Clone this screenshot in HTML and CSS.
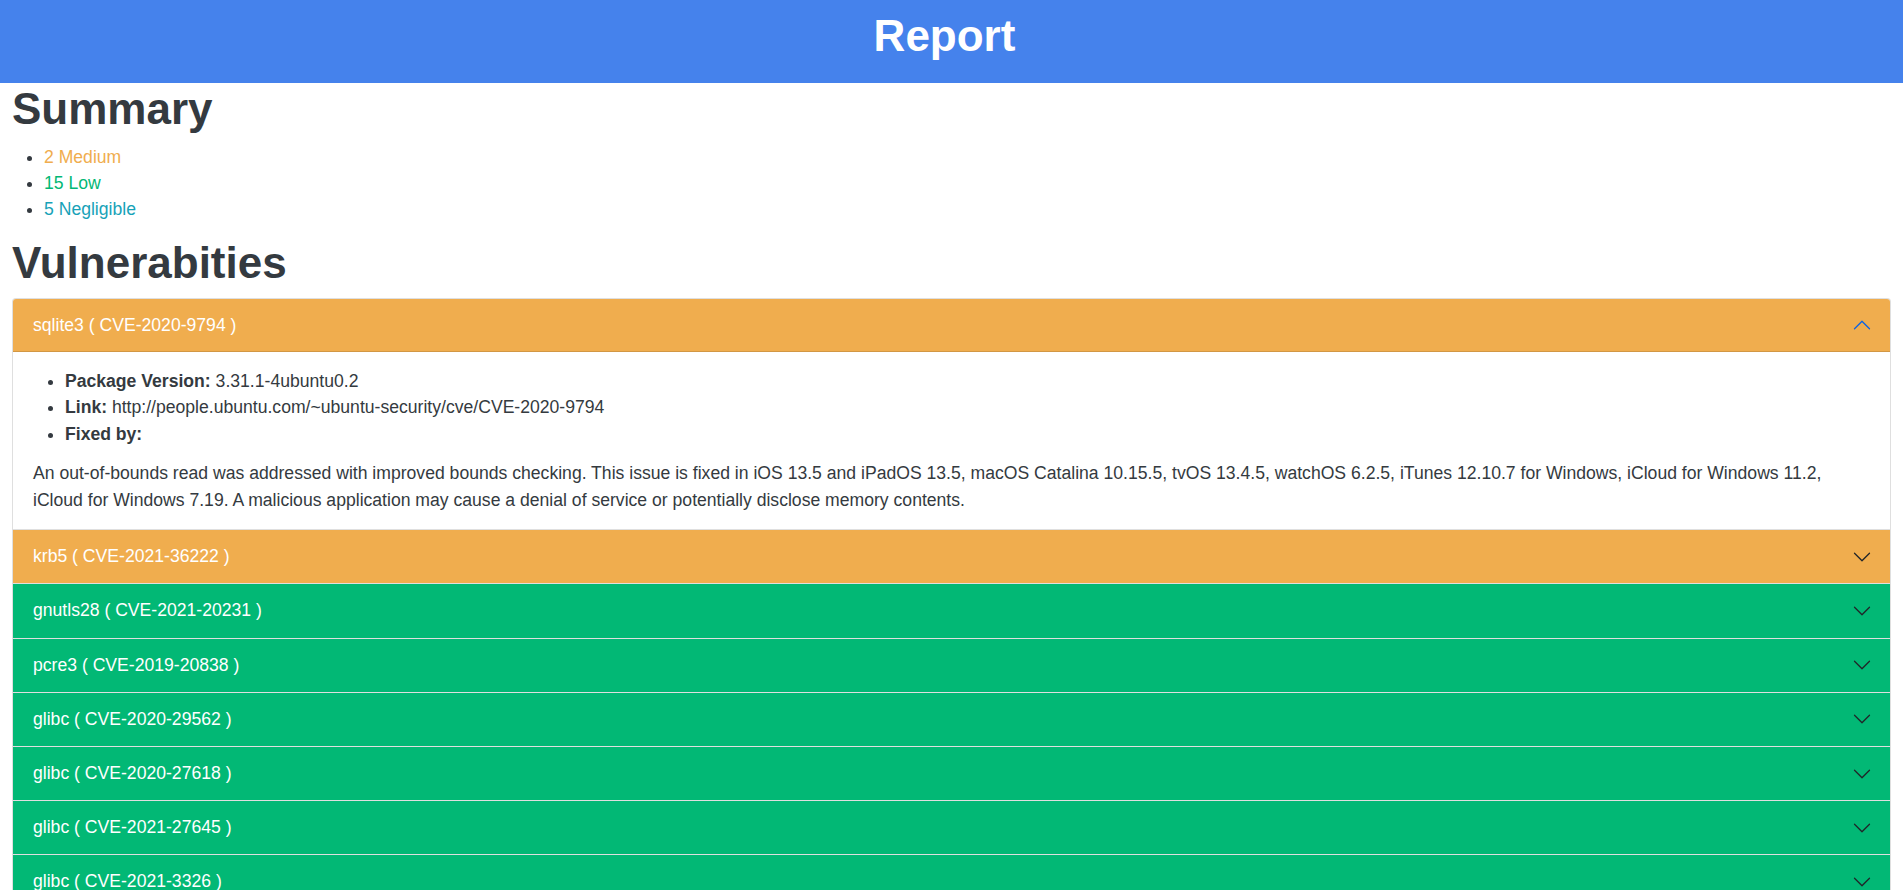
FILE: index.html
```html
<!DOCTYPE html>
<html lang="en">
<head>
<meta charset="utf-8">
<title>Report</title>
<link rel="stylesheet" href="styles.css">
</head>
<body>
<header class="topbar">
  <h1 class="topbar-title">Report</h1>
</header>
<main class="content">
  <h1 class="heading">Summary</h1>
  <ul class="summary-list">
    <li><span class="sev-medium">2 Medium</span></li>
    <li><span class="sev-low">15 Low</span></li>
    <li><span class="sev-negligible">5 Negligible</span></li>
  </ul>
  <h1 class="heading">Vulnerabities</h1>
  <div class="accordion">
    <div class="acc-item">
      <h2 class="acc-header">
        <button class="acc-btn bg-medium open" type="button">sqlite3 ( CVE-2020-9794 )
          <svg class="acc-icon icon-open" viewBox="0 0 16 16"><path fill-rule="evenodd" d="M1.646 4.646a.5.5 0 0 1 .708 0L8 10.293l5.646-5.647a.5.5 0 0 1 .708.708l-6 6a.5.5 0 0 1-.708 0l-6-6a.5.5 0 0 1 0-.708z"/></svg>
        </button>
      </h2>
      <div class="acc-body">
        <ul class="detail-list">
          <li><b>Package Version:</b> 3.31.1-4ubuntu0.2</li>
          <li><b>Link:</b> http://people.ubuntu.com/~ubuntu-security/cve/CVE-2020-9794</li>
          <li><b>Fixed by:</b></li>
        </ul>
        <p class="desc">An out-of-bounds read was addressed with improved bounds checking. This issue is fixed in iOS 13.5 and iPadOS 13.5, macOS Catalina 10.15.5, tvOS 13.4.5, watchOS 6.2.5, iTunes 12.10.7 for Windows, iCloud for Windows 11.2, iCloud for Windows 7.19. A malicious application may cause a denial of service or potentially disclose memory contents.</p>
      </div>
    </div>
    <div class="acc-item">
      <h2 class="acc-header">
        <button class="acc-btn bg-medium" type="button">krb5 ( CVE-2021-36222 )
          <svg class="acc-icon" viewBox="0 0 16 16"><path fill-rule="evenodd" d="M1.646 4.646a.5.5 0 0 1 .708 0L8 10.293l5.646-5.647a.5.5 0 0 1 .708.708l-6 6a.5.5 0 0 1-.708 0l-6-6a.5.5 0 0 1 0-.708z"/></svg>
        </button>
      </h2>
    </div>
    <div class="acc-item">
      <h2 class="acc-header">
        <button class="acc-btn bg-low" type="button">gnutls28 ( CVE-2021-20231 )
          <svg class="acc-icon" viewBox="0 0 16 16"><path fill-rule="evenodd" d="M1.646 4.646a.5.5 0 0 1 .708 0L8 10.293l5.646-5.647a.5.5 0 0 1 .708.708l-6 6a.5.5 0 0 1-.708 0l-6-6a.5.5 0 0 1 0-.708z"/></svg>
        </button>
      </h2>
    </div>
    <div class="acc-item">
      <h2 class="acc-header">
        <button class="acc-btn bg-low" type="button">pcre3 ( CVE-2019-20838 )
          <svg class="acc-icon" viewBox="0 0 16 16"><path fill-rule="evenodd" d="M1.646 4.646a.5.5 0 0 1 .708 0L8 10.293l5.646-5.647a.5.5 0 0 1 .708.708l-6 6a.5.5 0 0 1-.708 0l-6-6a.5.5 0 0 1 0-.708z"/></svg>
        </button>
      </h2>
    </div>
    <div class="acc-item">
      <h2 class="acc-header">
        <button class="acc-btn bg-low" type="button">glibc ( CVE-2020-29562 )
          <svg class="acc-icon" viewBox="0 0 16 16"><path fill-rule="evenodd" d="M1.646 4.646a.5.5 0 0 1 .708 0L8 10.293l5.646-5.647a.5.5 0 0 1 .708.708l-6 6a.5.5 0 0 1-.708 0l-6-6a.5.5 0 0 1 0-.708z"/></svg>
        </button>
      </h2>
    </div>
    <div class="acc-item">
      <h2 class="acc-header">
        <button class="acc-btn bg-low" type="button">glibc ( CVE-2020-27618 )
          <svg class="acc-icon" viewBox="0 0 16 16"><path fill-rule="evenodd" d="M1.646 4.646a.5.5 0 0 1 .708 0L8 10.293l5.646-5.647a.5.5 0 0 1 .708.708l-6 6a.5.5 0 0 1-.708 0l-6-6a.5.5 0 0 1 0-.708z"/></svg>
        </button>
      </h2>
    </div>
    <div class="acc-item">
      <h2 class="acc-header">
        <button class="acc-btn bg-low" type="button">glibc ( CVE-2021-27645 )
          <svg class="acc-icon" viewBox="0 0 16 16"><path fill-rule="evenodd" d="M1.646 4.646a.5.5 0 0 1 .708 0L8 10.293l5.646-5.647a.5.5 0 0 1 .708.708l-6 6a.5.5 0 0 1-.708 0l-6-6a.5.5 0 0 1 0-.708z"/></svg>
        </button>
      </h2>
    </div>
    <div class="acc-item">
      <h2 class="acc-header">
        <button class="acc-btn bg-low" type="button">glibc ( CVE-2021-3326 )
          <svg class="acc-icon" viewBox="0 0 16 16"><path fill-rule="evenodd" d="M1.646 4.646a.5.5 0 0 1 .708 0L8 10.293l5.646-5.647a.5.5 0 0 1 .708.708l-6 6a.5.5 0 0 1-.708 0l-6-6a.5.5 0 0 1 0-.708z"/></svg>
        </button>
      </h2>
    </div>
  </div>
</main>
</body>
</html>
```

FILE: styles.css
```css
html, body {
  margin: 0;
  padding: 0;
}

body {
  font-family: "Liberation Sans", Arial, sans-serif;
  font-size: 17.6px;
  line-height: 1.5;
  color: #343a40;
  background: #fff;
}

.topbar {
  background: #4582ec;
  padding: 10px 14px 12px 0;
  text-align: center;
}

.topbar-title {
  margin: 0 0 8px;
  font-size: 44px;
  line-height: 1.2;
  font-weight: 700;
  color: #fff;
}

.content {
  padding: 0 12px;
}

.heading {
  margin: 0 0 8px;
  font-size: 44px;
  line-height: 1.2;
  font-weight: 700;
  color: #343a40;
}

.summary-list {
  margin: 0 0 14px;
  padding-left: 32px;
}

.sev-medium { color: #f0ad4e; }
.sev-low { color: #02b875; }
.sev-negligible { color: #17a2b8; }

.accordion {
  display: flex;
  flex-direction: column;
}

.acc-item {
  background: #fff;
  border: 1px solid rgba(0, 0, 0, 0.125);
  border-top: 0;
}

.acc-item:first-child {
  border-top: 1px solid rgba(0, 0, 0, 0.125);
  border-top-left-radius: 4px;
  border-top-right-radius: 4px;
}

.acc-item:first-child .acc-btn {
  border-top-left-radius: 3px;
  border-top-right-radius: 3px;
}

.acc-header {
  margin: 0;
  font-size: inherit;
  font-weight: 400;
}

.acc-btn {
  display: flex;
  align-items: center;
  width: 100%;
  margin: 0;
  padding: 16px 18px 16px 20px;
  border: 0;
  font-family: inherit;
  font-size: 17.6px;
  line-height: 21.2px;
  color: #fff;
  text-align: left;
  cursor: pointer;
}

.bg-medium { background: #f0ad4e; }
.bg-low { background: #02b875; }

.acc-btn.open {
  box-shadow: inset 0 -1px 0 rgba(0, 0, 0, 0.125);
}

.acc-icon {
  flex-shrink: 0;
  width: 20px;
  height: 20px;
  margin-left: auto;
  fill: #212529;
}

.acc-icon.icon-open {
  fill: #0c63e4;
  transform: rotate(-180deg);
}

.acc-body {
  padding: 16px 20px;
}

.detail-list {
  margin: 0 0 13.5px;
  padding-left: 32px;
}

.desc {
  margin: 0;
}
```
